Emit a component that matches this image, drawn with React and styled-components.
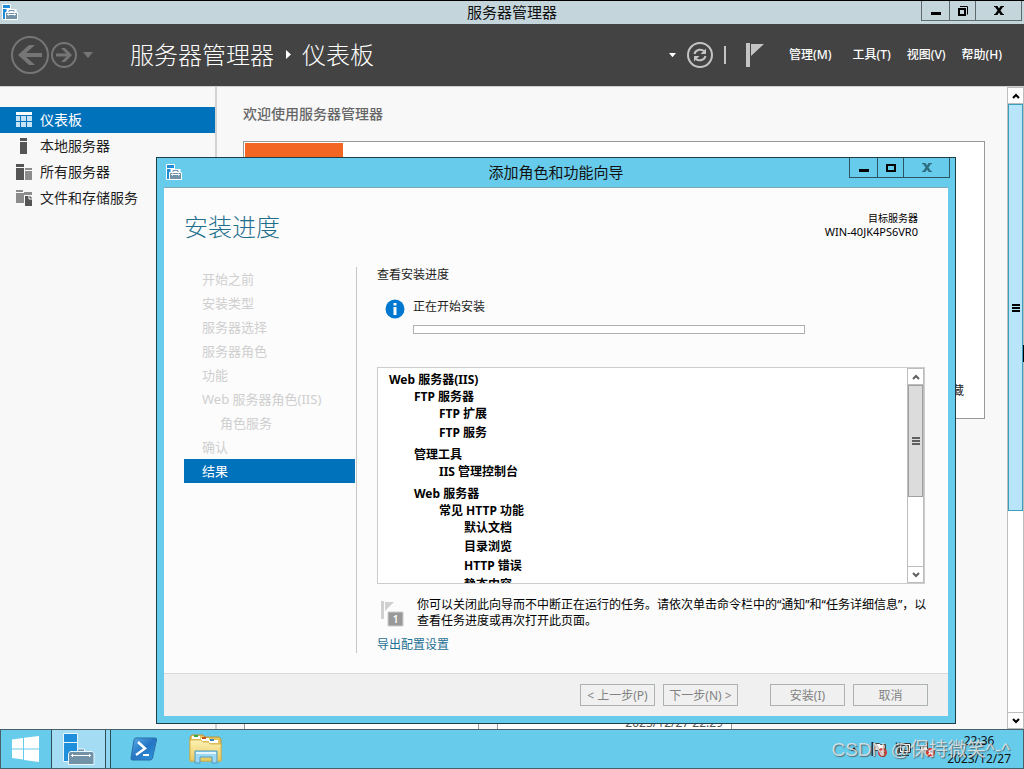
import React from "react";
import styled, { createGlobalStyle } from "styled-components";

const GlobalStyle = createGlobalStyle`
  * {
    box-sizing: border-box;
  }
  body {
    margin: 0;
    background: #f8f8f8;
    color: #1e1e1e;
    font-family: "Noto Sans", "Noto Sans CJK SC", sans-serif;
    font-size: 12px;
    line-height: 16px;
  }
  button {
    padding: 0;
    border: none;
    background: none;
    color: inherit;
    font: inherit;
  }
  ul {
    margin: 0;
    padding: 0;
    list-style: none;
  }
  h1, h2, p {
    margin: 0;
    font-weight: normal;
  }
  a {
    text-decoration: none;
  }
  svg {
    display: block;
    flex: none;
  }
`;

const Desktop = styled.div`
  position: relative;
  display: flex;
  flex-direction: column;
  height: 100vh;
  overflow: hidden;
`;

/* window chrome */

const TitleBar = styled.header`
  display: grid;
  grid-template-columns: 1fr auto 1fr;
  flex: none;
  height: ${props => (props.$dialog ? "29px" : "24px")};
  padding: ${props => (props.$dialog ? "0 5px" : "0 2px")};
  border-top: ${props => (props.$dialog ? "none" : "1px solid #000")};
  background: ${props => (props.$dialog ? "#67cbeb" : "#c4d6dc")};
  color: #111;
  font-size: 15px;
  line-height: ${props => (props.$dialog ? "28px" : "22px")};
`;

const TitleIcon = styled.span`
  padding: ${props => (props.$dialog ? "6px 0 0 4px" : "3px 0 0")};
`;

const WindowButtons = styled.div`
  display: flex;
  justify-content: flex-end;
`;

const WindowButton = styled.button`
  display: flex;
  align-items: center;
  justify-content: center;
  width: ${props => props.$width};
  height: 20px;
  border: 1px solid ${props => (props.$dialog ? "#2c5562" : "#5f686b")};
  border-top: none;
  margin-left: -1px;
`;

/* main window header */

const Header = styled.div`
  display: flex;
  align-items: center;
  flex: none;
  height: 63px;
  padding: 0 22px 0 10px;
  border-bottom: 1px solid #d0d0d0;
  background: #434343;
  color: #fff;
`;

const NavButtons = styled.div`
  display: flex;
  align-items: center;
  gap: 1px;
  width: 120px;
`;

const HistoryButton = styled.button`
  margin-left: 5px;
`;

const Breadcrumb = styled.h1`
  display: flex;
  align-items: center;
  gap: 11px;
  flex: 1;
  font-size: 24px;
  font-weight: 300;
  line-height: 32px;
`;

const Tools = styled.div`
  display: flex;
  align-items: center;
  gap: 11px;
  margin-right: 25px;
`;

const Separator = styled.span`
  width: 2px;
  height: 18px;
  background: #c4c4c4;
`;

const FlagButton = styled.button`
  margin-left: 9px;
`;

const Menu = styled.nav`
  display: flex;
  gap: 16px;
`;

const MenuButton = styled.button`
  font-weight: 500;

  &:first-child {
    margin-right: 5px;
  }
`;

/* main window body */

const Body = styled.div`
  display: flex;
  flex: 1;
  min-height: 0;
`;

const Sidebar = styled.nav`
  width: 217px;
  flex: none;
  padding-top: 20px;
  border-right: 2px solid #d2d2d2;
`;

const SidebarItem = styled.a`
  display: flex;
  align-items: center;
  gap: 8px;
  height: 26px;
  padding-left: 16px;
  background: ${props => (props.$active ? "#0072bc" : "none")};
  color: ${props => (props.$active ? "#fff" : "#1e1e1e")};
  font-size: 14px;
`;

const Main = styled.main`
  display: flex;
  flex-direction: column;
  flex: 1;
  min-width: 0;
  padding: 18px 22px 0 26px;
`;

const SectionTitle = styled.h2`
  color: #666;
  font-size: 14px;
  font-weight: 500;
  line-height: 18px;
`;

const WelcomePanel = styled.section`
  display: flex;
  justify-content: space-between;
  align-items: flex-end;
  height: 278px;
  margin-top: 18px;
  padding: 1px 20px 1px 1px;
  border: 1px solid #999;
  background: #fff;
`;

const QuickStart = styled.div`
  width: 98px;
  height: 86px;
  align-self: flex-start;
  background: #f26522;
`;

const HideButton = styled.button`
  margin-bottom: 18px;
`;

const Tiles = styled.div`
  display: flex;
  gap: 18px;
  margin-top: auto;
  padding-left: 1px;
`;

const Tile = styled.div`
  display: flex;
  align-items: flex-end;
  justify-content: flex-end;
  width: 235px;
  height: 120px;
  padding-right: 8px;
  border: 1px solid #999;
  border-bottom: none;
  background: #fff;
  color: #555;
  line-height: 12px;
`;

/* scroll bars */

const ScrollTrack = styled.div`
  display: flex;
  flex-direction: column;
  flex: none;
  width: 17px;
  border: 1px solid #bdbdbd;
  border-width: 0 1px;
  background: #fff;
`;

const ScrollButton = styled.button`
  display: flex;
  align-items: center;
  justify-content: center;
  flex: none;
  height: 17px;
  border: 1px solid #bdbdbd;
  border-width: 1px 0;
`;

const ScrollSpace = styled.div`
  flex: 1;
  min-height: 0;
`;

const ScrollThumb = styled.div`
  display: flex;
  align-items: center;
  justify-content: center;
  height: ${props => props.$size};
  border: 1px solid ${props => (props.$muted ? "#a0a0a0" : "#3a9fba")};
  background: ${props => (props.$muted ? "#dcdcdc" : "#b9e5fb")};
`;

/* wizard window */

const Dialog = styled.div`
  position: absolute;
  top: 157px;
  right: 68px;
  bottom: 45px;
  left: 156px;
  display: flex;
  flex-direction: column;
  border: 1px solid #1f3d48;
  background: #67cbeb;
`;

const DialogContent = styled.div`
  display: flex;
  flex-direction: column;
  flex: 1;
  min-height: 0;
  margin: 0 7px 7px;
  border-top: 1px solid #7aa9b8;
  background: #fcfcfc;
`;

const WizardHead = styled.div`
  display: flex;
  justify-content: space-between;
  flex: none;
  height: 79px;
  padding: 23px 30px 0 20px;
`;

const WizardTitle = styled.h2`
  color: #1f6f8c;
  font-size: 24px;
  font-weight: 300;
  line-height: 32px;
`;

const Destination = styled.p`
  padding-top: 1px;
  color: #000;
  font-size: 10px;
  line-height: 13px;
  text-align: right;
`;

const ServerName = styled.span`
  display: block;
  font-size: 11px;
`;

const WizardBody = styled.div`
  display: flex;
  flex: 1;
  min-height: 0;
  padding: 0 20px 20px;
`;

const Steps = styled.ul`
  width: 173px;
  flex: none;
  padding-right: 1px;
  border-right: 1px solid #c8c8c8;
`;

const Step = styled.li`
  height: 24px;
  padding-left: ${props => (props.$nested ? "36px" : "18px")};
  background: ${props => (props.$active ? "#0072bc" : "none")};
  color: ${props => (props.$active ? "#fff" : "#cfcfcf")};
  font-size: 13px;
  line-height: 24px;
`;

const Pane = styled.div`
  display: flex;
  flex-direction: column;
  flex: 1;
  min-width: 0;
  padding-left: 20px;
`;

const Status = styled.div`
  display: flex;
  gap: 8px;
  margin: 16px 0 33px;
  padding-left: 8px;
`;

const StatusText = styled.label`
  display: flex;
  flex-direction: column;
  gap: 10px;
`;

const ProgressBar = styled.progress`
  appearance: none;
  width: 392px;
  height: 9px;
  border: 1px solid #b0b0b0;
  background: #fff;

  &::-webkit-progress-bar {
    background: #fff;
  }
`;

const ResultBox = styled.div`
  display: flex;
  flex: 1;
  min-height: 0;
  margin-right: 3px;
  border: 1px solid #cccccc;
  background: #fff;
`;

const ResultTree = styled.div`
  flex: 1;
  overflow: hidden;
  padding: 3px 0 0 11px;
  color: #000;
  font-weight: 700;
  line-height: 17px;
`;

const Branch = styled.ul`
  padding-left: ${props => (props.$root ? "0" : "25px")};
`;

const BranchItem = styled.li`
  padding-bottom: ${props => (props.$leaf ? "2px" : "3px")};
`;

const Notice = styled.div`
  display: flex;
  align-items: flex-end;
  gap: 13px;
  margin: 13px 0 8px;
  padding-left: 4px;
  color: #000;
`;

const NoticeText = styled.p`
  flex: 1;
`;

const ExportLink = styled.a`
  align-self: flex-start;
  color: #1c6f93;
`;

const WizardFooter = styled.footer`
  display: flex;
  align-items: center;
  justify-content: flex-end;
  gap: 8px;
  flex: none;
  height: 43px;
  padding-right: 20px;
  border-top: 1px solid #d9d9d9;
  background: #f0f0f0;
`;

const FooterButton = styled.button`
  width: 75px;
  height: 22px;
  padding-top: 1px;
  margin-left: ${props => (props.$apart ? "24px" : "0")};
  border: 1px solid #adb2b5;
  color: #838383;
`;

/* taskbar */

const Taskbar = styled.footer`
  position: relative;
  display: flex;
  flex: none;
  height: 40px;
  border: 1px solid #4b5f68;
  background: #67cbeb;
`;

const TaskButton = styled.button`
  display: flex;
  align-items: center;
  justify-content: center;
  width: ${props => props.$width};
  background: ${props => (props.$active ? "#a3dcf3" : "none")};
  border: solid #2d4e5a;
  border-width: ${props => (props.$active ? "0 1px" : "0")};
`;

const TaskStack = styled.span`
  width: 5px;
  border-right: 1px solid #2d4e5a;
  background: #8fd6f0;
`;

const Tray = styled.div`
  display: flex;
  align-items: center;
  gap: 7px;
  margin-left: auto;
  padding-right: 12px;
`;

const TrayCaret = styled.button`
  margin-right: 7px;
`;

const Clock = styled.time`
  margin-left: 4px;
  padding-top: 2px;
  color: #111;
  line-height: 18px;
  text-align: center;
`;

const Watermark = styled.span`
  position: absolute;
  right: 13px;
  bottom: 6px;
  color: rgba(235, 235, 235, 0.8);
  font-family: "Liberation Sans", "Noto Sans CJK SC", sans-serif;
  font-size: 19px;
  line-height: 24px;
  text-shadow: 1px 1px 1px rgba(70, 70, 70, 0.7);
  white-space: nowrap;
`;

const EdgePointer = styled.span`
  position: absolute;
  top: 345px;
  right: 0;
  width: 1px;
  height: 17px;
  background: #000;
`;

const ServerIcon = () => (
  <svg width="16" height="16" viewBox="0 0 16 16">
    <path d="M.5.5h8v15h-8z" fill="#1f8ad6" stroke="#fff" />
    <path d="M1 4.500h7" stroke="#fff" />
    <path d="M6 8V6.500h7V8" fill="none" stroke="#fff" strokeWidth="3" />
    <path d="M3.500 8.500h12v7h-12z" fill="#7292a8" stroke="#fff" />
    <path d="M7 8V6.500h5V8" fill="none" stroke="#7292a8" />
    <path d="M5 10.500h9M6.500 9.500v2M12.500 9.500v2" stroke="#fff" />
  </svg>
);

const ServerTaskIcon = () => (
  <svg width="33" height="32" viewBox="0 0 33 32">
    <path d="M1.500.5h14v28h-14z" fill="#1f8edb" stroke="#e8f7fd" />
    <path d="M2 9.500h13" stroke="#e8f7fd" />
    <path d="M15.500 19v-3h7v3" fill="#7292a8" stroke="#e8f7fd" />
    <path d="M8 18.500h22.500l1.500 2v11H6.500v-11z" fill="#7292a8" stroke="#e8f7fd" />
    <path d="M9 22.500h20M10.500 21v3M27.500 21v3" stroke="#fff" />
  </svg>
);

const MinimizeIcon = () => (
  <svg width="10" height="12" viewBox="0 0 10 12">
    <path d="M0 7h10v3H0z" fill="#000" />
  </svg>
);

const RestoreIcon = () => (
  <svg width="10" height="10" viewBox="0 0 10 10" fill="none" stroke="#000">
    <path d="M1 3h6v6H1z" strokeWidth="2" />
    <path d="M2 .5h7.500v8" />
  </svg>
);

const MaximizeIcon = () => (
  <svg width="10" height="8" viewBox="0 0 10 8">
    <path d="M1 1h8v6H1z" fill="none" stroke="#000" strokeWidth="2" />
  </svg>
);

const CloseIcon = ({ color = "#000" }) => (
  <svg width="10" height="9" viewBox="0 0 10 9">
    <path
      d="M0 0h3.400L5 2.600 6.600 0H10v1H9L6.500 4.400 9 8h1v1H6.600L5 6.400 3.400 9H0V8h1l2.500-3.600L1 1H0z"
      fill={color}
    />
  </svg>
);

const BackIcon = () => (
  <svg width="40" height="40" viewBox="0 0 40 40" fill="none" stroke="#767676">
    <circle cx="20" cy="20" r="18" strokeWidth="2" />
    <path d="M32 20H11" strokeWidth="4" />
    <path d="M25 10h-6L8 20l11 10h6L14 20z" fill="#767676" stroke="none" />
  </svg>
);

const ForwardIcon = () => (
  <svg width="26" height="26" viewBox="0 0 26 26" fill="none" stroke="#767676">
    <circle cx="13" cy="13" r="12" strokeWidth="2" />
    <path d="M5 13h14" strokeWidth="3" />
    <path d="M10 6h4l7 7-7 7h-4l7-7z" fill="#767676" stroke="none" />
  </svg>
);

const Triangle = ({ size = 10, color = "#fff" }) => (
  <svg width={size} height={size * 0.6} viewBox="0 0 10 6">
    <path d="M0 0h10L5 6z" fill={color} />
  </svg>
);

const CrumbArrow = () => (
  <svg width="6" height="10" viewBox="0 0 6 10">
    <path d="M1 0v9l5-4.500z" fill="#fff" />
  </svg>
);

const RefreshIcon = () => (
  <svg width="26" height="26" viewBox="0 0 26 26" fill="none" stroke="#c4c4c4">
    <circle cx="13" cy="13" r="12" strokeWidth="2" />
    <path d="M7.500 12c1-4.500 7.500-6 10.500-2M18.500 14c-1 4.500-7.500 6-10.500 2" strokeWidth="2" />
    <path d="M19 6.500v5.500h-5.500zM7 19.500V14h5.500z" fill="#c4c4c4" stroke="none" />
  </svg>
);

const FlagIcon = () => (
  <svg width="18" height="24" viewBox="0 0 18 24">
    <path d="M0 0h4v24H0zM5 1h13L5 13z" fill="#c4c4c4" />
  </svg>
);

const DashboardIcon = () => (
  <svg width="16" height="16" viewBox="0 0 16 16">
    <path d="M0 0h16v3H0z" fill="#fff" />
    <path d="M0 4h4v5H0zM5 4h5v5H5zM11 4h5v5h-5zM0 10h4v5H0zM5 10h5v5H5zM11 10h5v5h-5z" fill="#c5e3f7" />
  </svg>
);

const LocalServerIcon = () => (
  <svg width="16" height="16" viewBox="0 0 16 16">
    <path d="M4 0h7v3H4zM4 4h7v12H4z" fill="#555" />
  </svg>
);

const AllServersIcon = () => (
  <svg width="16" height="16" viewBox="0 0 16 16">
    <path d="M0 0h8v3H0zM0 4h8v12H0z" fill="#555" />
    <path d="M9 4h7v2H9zM9 7h7v9H9z" fill="#8c8c8c" />
  </svg>
);

const StorageIcon = () => (
  <svg width="16" height="16" viewBox="0 0 16 16">
    <path d="M0 0h7v2H0zM0 3h8v10H0zM8 2h8v3H8z" fill="#8c8c8c" />
    <path d="M9 6h5l2 2v8H9z" fill="#555" />
    <path d="M13 6v3h3" fill="none" stroke="#fff" />
  </svg>
);

const Chevron = ({ down, color }) => (
  <svg width="8" height="6" viewBox="0 0 8 6">
    <path d={down ? "M1 1l3 3 3-3" : "M1 5l3-3 3 3"} fill="none" stroke={color} strokeWidth="2" />
  </svg>
);

const Grip = ({ color }) => (
  <svg width="8" height="8" viewBox="0 0 8 8">
    <path d="M0 1h8M0 4h8M0 7h8" stroke={color} strokeWidth="2" />
  </svg>
);

const InfoIcon = () => (
  <svg width="20" height="20" viewBox="0 0 20 20">
    <circle cx="10" cy="10" r="9.500" fill="#0078d0" />
    <path d="M8.500 4h3v2.500h-3zM8.500 8h3v8h-3z" fill="#fff" />
  </svg>
);

const NoticeIcon = () => (
  <svg width="23" height="28" viewBox="0 0 23 28">
    <path d="M0 0h3v18H0zM4 1h9L4 10z" fill="#d0d0d0" />
    <path d="M7 11h15v14H7z" fill="#999" stroke="#ccc" />
    <text x="14.500" y="22" fill="#fff" fontSize="10" fontWeight="600" textAnchor="middle">1</text>
  </svg>
);

const StartIcon = () => (
  <svg width="28" height="28" viewBox="0 0 28 28" fill="#fff">
    <path d="M0 4.500l11-1.500v10.500H0zM12 2.800L27 1v12.500H12zM0 14.500h11v10L0 23zM12 14.500h15V27l-15-2z" />
  </svg>
);

const PowerShellIcon = () => (
  <svg width="28" height="24" viewBox="0 0 28 24">
    <defs>
      <linearGradient id="shell" x1="0" y1="0" x2="1" y2="1">
        <stop offset="0" stopColor="#5cb1e8" />
        <stop offset="0.500" stopColor="#2574c4" />
        <stop offset="1" stopColor="#2f9ae0" />
      </linearGradient>
    </defs>
    <path d="M6 1h19q2 0 1.500 2l-4 18q-.5 2-2.500 2H2.500Q.5 23 1 21L4 3q.5-2 2-2z" fill="url(#shell)" stroke="#2b6ea8" />
    <path d="M8 5l7 6.500L6 18" fill="none" stroke="#fff" strokeWidth="2.500" />
    <path d="M13 18h6" stroke="#fff" strokeWidth="2" />
  </svg>
);

const ExplorerIcon = () => (
  <svg width="34" height="30" viewBox="0 0 34 30">
    <defs>
      <linearGradient id="folder" x1="0" y1="0" x2="0" y2="1">
        <stop offset="0" stopColor="#fdf3b5" />
        <stop offset="1" stopColor="#e9c95e" />
      </linearGradient>
    </defs>
    <path d="M1 3l2-2h11l2 2h14l2 2v22H1z" fill="#e6c661" stroke="#b9953a" />
    <path d="M3 2h8v3H3zM12 4h8v3h-8zM20 6h9v3h-9z" fill="#fff" />
    <path d="M5 1h4v2H5z" fill="#39a935" />
    <path d="M13 3h4v2h-4z" fill="#c4501b" />
    <path d="M21 5h4v2h-4z" fill="#3a8ab5" />
    <path d="M1 6h11l2 2h5l2 2h11v17H1z" fill="url(#folder)" stroke="#d8b650" />
    <path d="M6 29V17h22v12h-5v-6H11v6z" fill="#9fd8f2" stroke="#4d9cc4" />
    <path d="M7 18h20v2H7z" fill="#e2f6ff" />
  </svg>
);

const ErrorBadge = () => (
  <g>
    <circle cx="11.500" cy="11.500" r="4.500" fill="#d9352b" />
    <path d="M9.500 9.500l4 4M13.500 9.500l-4 4" stroke="#fff" strokeWidth="1.500" />
  </g>
);

const ActionTrayIcon = () => (
  <svg width="17" height="17" viewBox="0 0 17 17">
    <path d="M1.500 1v14" stroke="#222" strokeWidth="2" />
    <path d="M3.500 2.500h5l1 1h5v7h-5l-1-1h-5z" fill="#fff" stroke="#444" />
    <ErrorBadge />
  </svg>
);

const NetworkTrayIcon = () => (
  <svg width="17" height="17" viewBox="0 0 17 17" stroke="#333">
    <path d="M4.500 2.500h11v9h-11z" fill="#fff" />
    <path d="M6.500 4.500h7v5h-7z" fill="#67cbeb" />
    <path d="M7 14.500h7M10.500 12v2" />
    <path d="M1.500 1.500v4h3v-4M3 5.500v9h3" fill="none" strokeWidth="1.500" />
  </svg>
);

const SoundTrayIcon = () => (
  <svg width="17" height="17" viewBox="0 0 17 17">
    <path d="M1.500 5.500h3l4-4v13l-4-4h-3z" fill="#fff" stroke="#444" />
    <ErrorBadge />
  </svg>
);

const sidebarItems = [
  { label: "仪表板", Icon: DashboardIcon, active: true },
  { label: "本地服务器", Icon: LocalServerIcon },
  { label: "所有服务器", Icon: AllServersIcon },
  { label: "文件和存储服务", Icon: StorageIcon },
];

const steps = [
  { label: "开始之前" },
  { label: "安装类型" },
  { label: "服务器选择" },
  { label: "服务器角色" },
  { label: "功能" },
  { label: "Web 服务器角色(IIS)" },
  { label: "角色服务", nested: true },
  { label: "确认" },
  { label: "结果", active: true },
];

const results = [
  {
    label: "Web 服务器(IIS)",
    children: [
      { label: "FTP 服务器", children: [{ label: "FTP 扩展" }, { label: "FTP 服务" }] },
      { label: "管理工具", children: [{ label: "IIS 管理控制台" }] },
      {
        label: "Web 服务器",
        children: [
          {
            label: "常见 HTTP 功能",
            children: [
              { label: "默认文档" },
              { label: "目录浏览" },
              { label: "HTTP 错误" },
              { label: "静态内容" },
            ],
          },
        ],
      },
    ],
  },
];

const Tree = ({ items, root }) => (
  <Branch $root={root}>
    {items.map(item => (
      <BranchItem key={item.label} $leaf={!item.children}>
        {item.label}
        {item.children ? <Tree items={item.children} /> : null}
      </BranchItem>
    ))}
  </Branch>
);

const ScrollBar = ({ size, muted }) => {
  const color = muted ? "#606060" : "#000";

  return (
    <ScrollTrack>
      <ScrollButton aria-label="向上滚动"><Chevron color={color} /></ScrollButton>
      <ScrollSpace>
        <ScrollThumb $size={size} $muted={muted}><Grip color={color} /></ScrollThumb>
      </ScrollSpace>
      <ScrollButton aria-label="向下滚动"><Chevron down color={color} /></ScrollButton>
    </ScrollTrack>
  );
};

const Wizard = () => (
  <Dialog role="dialog" aria-label="添加角色和功能向导">
    <TitleBar $dialog>
      <TitleIcon $dialog><ServerIcon /></TitleIcon>
      <span>添加角色和功能向导</span>
      <WindowButtons>
        <WindowButton $dialog $width="29px" aria-label="最小化"><MinimizeIcon /></WindowButton>
        <WindowButton $dialog $width="27px" aria-label="最大化"><MaximizeIcon /></WindowButton>
        <WindowButton $dialog $width="47px" aria-label="关闭"><CloseIcon color="#2f6d80" /></WindowButton>
      </WindowButtons>
    </TitleBar>
    <DialogContent>
      <WizardHead>
        <WizardTitle>安装进度</WizardTitle>
        <Destination>
          目标服务器
          <ServerName>WIN-40JK4PS6VR0</ServerName>
        </Destination>
      </WizardHead>
      <WizardBody>
        <Steps>
          {steps.map(step => (
            <Step key={step.label} $active={step.active} $nested={step.nested}>
              {step.label}
            </Step>
          ))}
        </Steps>
        <Pane>
          <p>查看安装进度</p>
          <Status>
            <InfoIcon />
            <StatusText>
              正在开始安装
              <ProgressBar value="0" max="100" />
            </StatusText>
          </Status>
          <ResultBox>
            <ResultTree><Tree items={results} root /></ResultTree>
            <ScrollBar size="62%" muted />
          </ResultBox>
          <Notice>
            <NoticeIcon />
            <NoticeText>
              你可以关闭此向导而不中断正在运行的任务。请依次单击命令栏中的“通知”和“任务详细信息”，以查看任务进度或再次打开此页面。
            </NoticeText>
          </Notice>
          <ExportLink href="#export">导出配置设置</ExportLink>
        </Pane>
      </WizardBody>
      <WizardFooter>
        <FooterButton disabled>&lt; 上一步(P)</FooterButton>
        <FooterButton disabled>下一步(N) &gt;</FooterButton>
        <FooterButton disabled $apart>安装(I)</FooterButton>
        <FooterButton disabled>取消</FooterButton>
      </WizardFooter>
    </DialogContent>
  </Dialog>
);

const App = () => (
  <Desktop>
    <GlobalStyle />
    <TitleBar>
      <TitleIcon><ServerIcon /></TitleIcon>
      <span>服务器管理器</span>
      <WindowButtons>
        <WindowButton $width="29px" aria-label="最小化"><MinimizeIcon /></WindowButton>
        <WindowButton $width="27px" aria-label="还原"><RestoreIcon /></WindowButton>
        <WindowButton $width="47px" aria-label="关闭"><CloseIcon /></WindowButton>
      </WindowButtons>
    </TitleBar>
    <Header>
      <NavButtons>
        <button aria-label="后退"><BackIcon /></button>
        <button aria-label="前进"><ForwardIcon /></button>
        <HistoryButton aria-label="历史记录"><Triangle color="#767676" /></HistoryButton>
      </NavButtons>
      <Breadcrumb>服务器管理器<CrumbArrow />仪表板</Breadcrumb>
      <Tools>
        <button aria-label="更多"><Triangle size={7} /></button>
        <button aria-label="刷新"><RefreshIcon /></button>
        <Separator />
        <FlagButton aria-label="通知"><FlagIcon /></FlagButton>
      </Tools>
      <Menu>
        <MenuButton>管理(M)</MenuButton>
        <MenuButton>工具(T)</MenuButton>
        <MenuButton>视图(V)</MenuButton>
        <MenuButton>帮助(H)</MenuButton>
      </Menu>
    </Header>
    <Body>
      <Sidebar>
        {sidebarItems.map(({ label, Icon, active }) => (
          <SidebarItem key={label} href="#" $active={active}>
            <Icon />
            {label}
          </SidebarItem>
        ))}
      </Sidebar>
      <Main>
        <SectionTitle>欢迎使用服务器管理器</SectionTitle>
        <WelcomePanel>
          <QuickStart />
          <HideButton>隐藏</HideButton>
        </WelcomePanel>
        <Tiles>
          <Tile />
          <Tile>2023/12/27 22:29</Tile>
        </Tiles>
      </Main>
      <ScrollBar size="67%" />
    </Body>
    <Taskbar>
      <TaskButton $width="50px" aria-label="开始"><StartIcon /></TaskButton>
      <TaskButton $width="55px" $active aria-label="服务器管理器"><ServerTaskIcon /></TaskButton>
      <TaskStack />
      <TaskButton $width="66px" aria-label="Windows PowerShell"><PowerShellIcon /></TaskButton>
      <TaskButton $width="58px" aria-label="文件资源管理器"><ExplorerIcon /></TaskButton>
      <Tray>
        <TrayCaret aria-label="显示隐藏的图标">
          <svg width="6" height="4" viewBox="0 0 6 4"><path d="M3 0l3 4H0z" fill="#111" /></svg>
        </TrayCaret>
        <ActionTrayIcon />
        <NetworkTrayIcon />
        <SoundTrayIcon />
        <Clock>22:36<br />2023/12/27</Clock>
      </Tray>
      <Watermark>CSDN @保持微笑^-^</Watermark>
    </Taskbar>
    <Wizard />
    <EdgePointer />
  </Desktop>
);

export default App;
